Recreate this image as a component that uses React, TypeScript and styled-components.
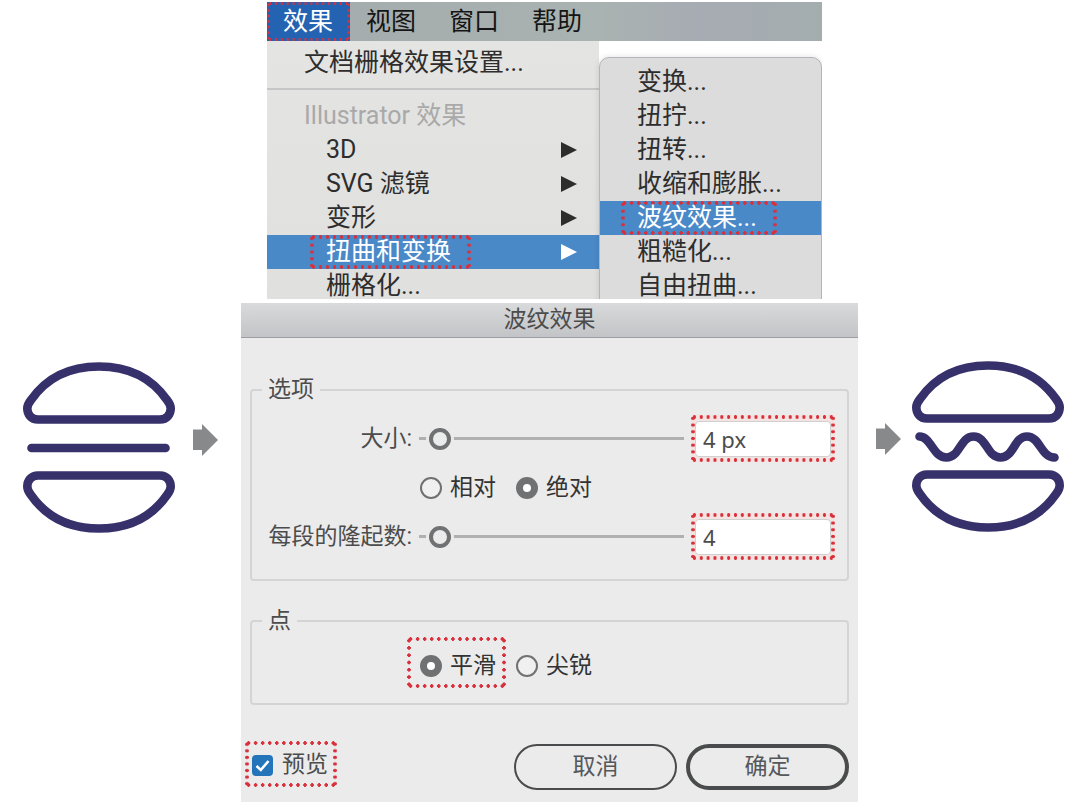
import React from "react";
import styled, { createGlobalStyle, css } from "styled-components";

const GlobalStyle = createGlobalStyle`
  *, *::before, *::after { box-sizing: border-box; }
  body { margin: 0; background: #fff; }
  body, button, input {
    font-family: Roboto, "Noto Sans CJK SC", sans-serif;
  }
`;

const sheet = "#ebebeb";
const accent = "#4a89c8";

const dots = css<{ $dot?: number }>`
  --dot: ${(p) => p.$dot ?? 4}px;
  --h: calc(var(--dot) + 3px) var(--dot);
  --v: var(--dot) calc(var(--dot) + 3px);
  --ink: radial-gradient(circle closest-side, #d8303c 80%, transparent 100%);
  background-image: var(--ink), var(--ink), var(--ink), var(--ink);
  background-size: var(--h), var(--h), var(--v), var(--v);
  background-position: left top, left bottom, left top, right top;
  background-repeat: round no-repeat, round no-repeat, no-repeat round, no-repeat round;
`;

const Page = styled.main`
  display: grid;
  grid-template-columns: auto minmax(0, 1fr) auto;
  grid-template-rows: auto auto;
  row-gap: 4px;
  padding: 2px 16px 0 23px;
`;

const Side = styled.div<{ $pad: string; $gap: number }>`
  grid-row: 2;
  display: flex;
  align-items: flex-start;
  gap: ${(p) => p.$gap}px;
  padding: ${(p) => p.$pad};
`;

const ArrowBox = styled.div`
  padding-top: 62px;
  line-height: 0;
`;

const Menu = styled.section`
  grid-column: 2;
  grid-row: 1;
  margin: 0 36px 0 26px;
`;

const MenuBar = styled.nav`
  display: flex;
  height: 39px;
  background: linear-gradient(90deg, #a3aaac, #a9b3b1 60%, #a7abb3 78%, #a3adae);
`;

const BarItem = styled.button<{ $active?: boolean }>`
  border: 0;
  padding: 0 17px 0 16px;
  font-size: 25px;
  line-height: 38px;
  color: ${(p) => (p.$active ? "#fff" : "#151515")};
  background-color: ${(p) => (p.$active ? "#2463b2" : "transparent")};
  ${(p) => p.$active && dots}
`;

const Panels = styled.div`
  display: flex;
  height: 258px;
  overflow: hidden;
`;

const Panel = styled.div`
  flex: 1;
  padding-top: 5px;
  background: linear-gradient(#e4e4e2, #e0e0de);
`;

const SubPanel = styled.div`
  flex: 0 0 223px;
  margin-top: 16px;
  height: 280px;
  padding-top: 7px;
  border: 1px solid #b4b4ba;
  border-radius: 10px 10px 0 0;
  background: #dcdcdc;
  box-shadow: 0 0 6px rgba(0, 0, 0, 0.12);
`;

const Item = styled.button<{ $indent: number; $on?: boolean; $muted?: boolean }>`
  display: flex;
  align-items: center;
  justify-content: space-between;
  width: 100%;
  height: 34px;
  border: 0;
  padding: 0 22px 0 ${(p) => p.$indent}px;
  font-size: 25px;
  line-height: 34px;
  text-align: left;
  white-space: nowrap;
  color: ${(p) => (p.$on ? "#fff" : p.$muted ? "#a9a9a9" : "#2d2d2d")};
  background: ${(p) => (p.$on ? accent : "transparent")};
`;

const Marked = styled.span`
  padding: 0 20px 0 16px;
  margin-left: -16px;
  height: 34px;
  ${dots}
`;

const Separator = styled.hr`
  height: 2px;
  margin: 8px 0 9px;
  border: 0;
  background: #c6c6c6;
`;

const Dialog = styled.form`
  grid-column: 2;
  grid-row: 2;
  background: ${sheet};
  color: #4c4c4c;
  font-size: 23px;
`;

const TitleBar = styled.h1`
  margin: 0;
  height: 35px;
  border-bottom: 1px solid #9d9ea1;
  background: linear-gradient(#d9dadb, #c3c4c7);
  font-size: 23px;
  font-weight: 400;
  line-height: 34px;
  text-align: center;
`;

const Body = styled.div`
  padding: 40px 9px 12px;
`;

const Group = styled.fieldset<{ $pad: string }>`
  min-width: 0;
  margin: 0 0 28px;
  border: 2px solid #d3d4d5;
  border-radius: 4px;
  padding: ${(p) => p.$pad};
`;

const Legend = styled.legend`
  margin-left: -6px;
  padding: 0 6px;
  line-height: 24px;
`;

const Row = styled.div`
  display: grid;
  grid-template-columns: 144px minmax(0, 1fr) 144px;
  column-gap: 7px;
  align-items: center;
  height: 49px;
`;

const RowLabel = styled.label`
  text-align: right;
  white-space: nowrap;
  line-height: 32px;
`;

const Slider = styled.input`
  appearance: none;
  width: 100%;
  height: 22px;
  margin: 0;
  background: linear-gradient(#b0b0b1, #b0b0b1) center / 100% 3px no-repeat;
  &::-webkit-slider-thumb {
    appearance: none;
    width: 22px;
    height: 22px;
    border: 4px solid #707172;
    border-radius: 50%;
    background: ${sheet};
    box-shadow: 0 0 0 3px ${sheet};
  }
`;

const FieldFrame = styled.div`
  height: 47px;
  padding: 6px 4px 5px;
  background-color: #f4e4e1;
  ${dots}
`;

const Field = styled.input`
  display: block;
  width: 100%;
  height: 36px;
  border: 1px solid #d0d0d0;
  border-radius: 4px;
  padding: 0 7px;
  background: #fff;
  color: #4c4c4c;
  font-family: "Noto Sans", sans-serif;
  font-size: 22px;
`;

const Choices = styled.div`
  grid-column: 2 / 4;
  display: flex;
  align-items: center;
  gap: 20px;
  padding-left: 1px;
`;

const Choice = styled.label`
  display: flex;
  align-items: center;
  gap: 8px;
  line-height: 32px;
  color: #333;
`;

const MarkedChoice = styled(Choice)`
  height: 51px;
  padding: 6px 10px 0 13px;
  margin: -6px -10px 0 -13px;
  ${dots}
`;

const Radio = styled.input`
  appearance: none;
  width: 22px;
  height: 22px;
  margin: 0;
  border: 2px solid #707172;
  border-radius: 50%;
  background: #f0f0f0;
  &:checked {
    border-width: 7px;
    background: #fff;
  }
`;

const Footer = styled.div`
  display: flex;
  align-items: center;
  gap: 9px;
  padding-top: 11px;
`;

const Preview = styled.label`
  display: flex;
  align-items: center;
  gap: 9px;
  height: 46px;
  margin: -6px auto 0 -5px;
  padding: 2px 9px 0 7px;
  line-height: 32px;
  ${dots}
`;

const CheckBox = styled.span`
  display: grid;
  width: 21px;
  height: 21px;
  > * {
    grid-area: 1 / 1;
  }
`;

const CheckInput = styled.input`
  appearance: none;
  width: 21px;
  height: 21px;
  margin: 0;
  border-radius: 4px;
  background: #9a9a9a;
  &:checked {
    background: #2474b9;
  }
`;

const Push = styled.button<{ $primary?: boolean }>`
  width: 163px;
  height: 46px;
  padding: 0;
  border: ${(p) => (p.$primary ? 4 : 2)}px solid #4a4b4c;
  border-radius: 23px;
  background: transparent;
  color: #55575a;
  font-size: 23px;
  line-height: 32px;
`;

const Triangle = () => (
  <svg width="16" height="18" viewBox="0 0 16 18" aria-hidden="true">
    <path d="M0 1 16 9 0 17Z" fill="currentColor" />
  </svg>
);

const Arrow = () => (
  <ArrowBox>
    <svg width="25" height="32" viewBox="0 0 25 32" aria-hidden="true">
      <path d="M0 5.5H9V0L25 16 9 32V26H0Z" fill="#87898b" />
    </svg>
  </ArrowBox>
);

const bun =
  "M15 57.5H137C144 57.5 147.7 52 147.7 46.5C147.7 43 146 40.500 144 38C128 15 104 4.5 76 4.5S24 15 8 38C6 40.500 4.3 43 4.3 46.5C4.3 52 8 57.5 15 57.5Z";

const Burger = ({ filling }: { filling: string }) => (
  <svg width="152" height="171" viewBox="0 0 152 171" fill="none" stroke="#36316a" strokeWidth="8.6" strokeLinecap="round" aria-hidden="true">
    <path d={bun} />
    <path d={filling} />
    <path d={bun} transform="translate(0 171) scale(1 -1)" />
  </svg>
);

const subItems = ["变换...", "扭拧...", "扭转...", "收缩和膨胀...", "波纹效果...", "粗糙化...", "自由扭曲..."];

export default function App() {
  return (
    <>
      <GlobalStyle />
      <Page>
        <Menu>
          <MenuBar>
            <BarItem $active $dot={3}>效果</BarItem>
            <BarItem>视图</BarItem>
            <BarItem>窗口</BarItem>
            <BarItem>帮助</BarItem>
          </MenuBar>
          <Panels>
            <Panel>
              <Item $indent={37}>文档栅格效果设置...</Item>
              <Separator />
              <Item $indent={37} $muted>Illustrator 效果</Item>
              <Item $indent={59}>3D<Triangle /></Item>
              <Item $indent={59}>SVG 滤镜<Triangle /></Item>
              <Item $indent={59}>变形<Triangle /></Item>
              <Item $indent={59} $on><Marked>扭曲和变换</Marked><Triangle /></Item>
              <Item $indent={59}>栅格化...</Item>
            </Panel>
            <SubPanel>
              {subItems.map((name) => {
                const on = name === "波纹效果...";
                return (
                  <Item key={name} $indent={37} $on={on}>
                    {on ? <Marked>{name}</Marked> : name}
                  </Item>
                );
              })}
            </SubPanel>
          </Panels>
        </Menu>

        <Side $pad="59px 23px 0 0" $gap={18}>
          <Burger filling="M8.5 86H142.5" />
          <Arrow />
        </Side>

        <Dialog onSubmit={(e) => e.preventDefault()}>
          <TitleBar>波纹效果</TitleBar>
          <Body>
            <Group $pad="12px 12px 18px 16px">
              <Legend>选项</Legend>
              <Row>
                <RowLabel htmlFor="size">大小:</RowLabel>
                <Slider type="range" defaultValue={4} aria-label="大小" />
                <FieldFrame><Field id="size" defaultValue="4 px" /></FieldFrame>
              </Row>
              <Row>
                <Choices>
                  <Choice><Radio type="radio" name="mode" />相对</Choice>
                  <Choice><Radio type="radio" name="mode" defaultChecked />绝对</Choice>
                </Choices>
              </Row>
              <Row>
                <RowLabel htmlFor="ridges">每段的隆起数:</RowLabel>
                <Slider type="range" defaultValue={4} aria-label="每段的隆起数" />
                <FieldFrame><Field id="ridges" defaultValue="4" /></FieldFrame>
              </Row>
            </Group>
            <Group $pad="8px 12px 13px 16px">
              <Legend>点</Legend>
              <Row>
                <Choices>
                  <MarkedChoice><Radio type="radio" name="point" defaultChecked />平滑</MarkedChoice>
                  <Choice><Radio type="radio" name="point" />尖锐</Choice>
                </Choices>
              </Row>
            </Group>
            <Footer>
              <Preview>
                <CheckBox>
                  <CheckInput type="checkbox" defaultChecked />
                  <svg width="21" height="21" viewBox="0 0 21 21" fill="none" stroke="#fff" strokeWidth="2.6" aria-hidden="true">
                    <path d="M4.5 11 8.8 15 16.5 6" />
                  </svg>
                </CheckBox>
                预览
              </Preview>
              <Push type="button">取消</Push>
              <Push type="submit" $primary>确定</Push>
            </Footer>
          </Body>
        </Dialog>

        <Side $pad="58px 0 0 18px" $gap={11}>
          <Arrow />
          <Burger filling="M7.5 75.5C19 75.5 21 96.5 34.5 96.5S48 75.5 61.5 75.5 75 96.5 88.5 96.5 102 75.5 115 75.5 129 96.5 142.5 96.5" />
        </Side>
      </Page>
    </>
  );
}
